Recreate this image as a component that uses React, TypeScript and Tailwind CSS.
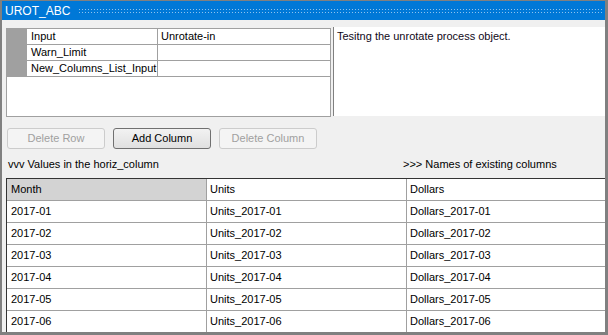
import React from 'react';

const font = { fontFamily: '"Segoe UI", "Liberation Sans", Arial, sans-serif' };

const params = [
  { name: 'Input', value: 'Unrotate-in' },
  { name: 'Warn_Limit', value: '' },
  { name: 'New_Columns_List_Input', value: '' },
];

const months = ['2017-01', '2017-02', '2017-03', '2017-04', '2017-05', '2017-06'];

function Button({ label, disabled }: { label: string; disabled?: boolean }) {
  return (
    <button
      className={
        disabled
          ? 'h-[21px] w-[98px] rounded-[3px] border border-[#cccccc] bg-[#f4f4f4] text-[11px] text-[#a0a0a0]'
          : 'h-[21px] w-[98px] rounded-[3px] border border-[#707070] bg-gradient-to-b from-[#f2f2f2] to-[#e0e0e0] text-[11px] text-black'
      }
    >
      {label}
    </button>
  );
}

export default function App() {
  return (
    <div
      className="flex h-[335px] w-[608px] flex-col overflow-hidden border-b-[3px] border-l-2 border-r-[3px] border-t border-[#808080] bg-[#f0f0f0] text-[11px] text-black"
      style={font}
    >
      {/* Title bar */}
      <div className="flex h-[19px] shrink-0 items-center bg-[#0078d7] pl-[3px] pr-[1px]">
        <span className="text-[12px] leading-none text-white">UROT_ABC</span>
        <div className="ml-[8px] h-[5px] flex-1 bg-[radial-gradient(circle,#8ec2ee_0.8px,transparent_1px)] bg-[length:3px_3px]" />
      </div>

      {/* Parameters + description */}
      <div className="mt-[8px] flex h-[90px] shrink-0 items-start">
        <div className="ml-[4px] h-[89px] w-[325px] border border-[#a0a0a0] bg-white">
          {params.map((p) => (
            <div key={p.name} className="flex h-[16px] border-b border-[#a0a0a0]">
              <div className="w-[20px] bg-[#a0a0a0]" />
              <div className="w-[131px] whitespace-nowrap border-r border-[#a0a0a0] pl-[4px] leading-[15px]">{p.name}</div>
              <div className="flex-1 pl-[3px] leading-[15px]">{p.value}</div>
            </div>
          ))}
        </div>
        <div className="-mt-[1px] ml-[2px] h-[89px] flex-1 border-l border-[#808080] bg-white pl-[3px] pt-[1px] leading-[16px] text-[#100818]">
          Tesitng the unrotate process object.
        </div>
      </div>

      {/* Buttons */}
      <div className="ml-[5px] mt-[10px] flex shrink-0 gap-[8px]">
        <Button label="Delete Row" disabled />
        <Button label="Add Column" />
        <Button label="Delete Column" disabled />
      </div>

      {/* Labels */}
      <div className="mt-[8px] flex h-[14px] shrink-0 items-center leading-none">
        <span className="ml-[6px] w-[395px]">vvv Values in the horiz_column</span>
        <span>&gt;&gt;&gt; Names of existing columns</span>
      </div>

      {/* Data grid */}
      <div className="ml-[4px] mt-[7px] flex-1 overflow-hidden border-l border-t border-[#333333] bg-white">
        <div className="flex h-[22px] border-b border-[#a0a0a0]">
          <div className="w-[200px] border-r border-[#a0a0a0] bg-[#d3d3d3] pl-[4px] leading-[21px]">Month</div>
          <div className="w-[200px] border-r border-[#a0a0a0] pl-[3px] leading-[21px]">Units</div>
          <div className="flex-1 pl-[3px] leading-[21px]">Dollars</div>
        </div>
        {months.map((m) => (
          <div key={m} className="flex h-[22px] border-b border-[#a0a0a0]">
            <div className="w-[200px] border-r border-[#a0a0a0] pl-[4px] leading-[21px]">{m}</div>
            <div className="w-[200px] border-r border-[#a0a0a0] pl-[3px] leading-[21px]">Units_{m}</div>
            <div className="flex-1 pl-[3px] leading-[21px]">Dollars_{m}</div>
          </div>
        ))}
      </div>
    </div>
  );
}
